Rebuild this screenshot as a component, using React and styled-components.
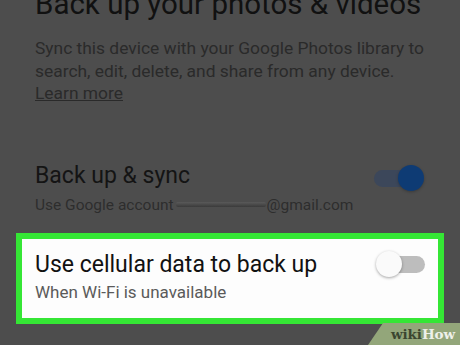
import React from "react";
import styled, { createGlobalStyle } from "styled-components";

const Global = createGlobalStyle`
  html, body {
    margin: 0;
    padding: 0;
    background: #4d4d4d;
  }
  * { box-sizing: border-box; }
`;

const Screen = styled.div`
  position: relative;
  width: 460px;
  height: 345px;
  overflow: hidden;
  background: #4d4d4d;
  font-family: Roboto, "Noto Sans", sans-serif;
`;

const Dimmed = styled.div`
  padding: 0 34px 0 35px;
`;

const Title = styled.h1`
  margin: -13px 0 0;
  font-size: 29.5px;
  font-weight: 400;
  line-height: 34px;
  color: #111;
  white-space: nowrap;
`;

const Blurb = styled.p`
  margin: 16px 0 0;
  font-size: 17.4px;
  line-height: 22.5px;
  color: #2a2a2a;
`;

const LearnMore = styled.a`
  color: #2a2a2a;
  text-decoration: underline;
`;

const Row = styled.div`
  display: flex;
  align-items: flex-start;
  justify-content: space-between;
  padding: ${p => p.$pad || "0"};
`;

const Texts = styled.div`
  display: flex;
  flex-direction: column;
`;

const Label = styled.div`
  font-size: 23px;
  line-height: 27px;
  color: ${p => (p.$lit ? "#111" : "#141414")};
  white-space: nowrap;
`;

const Sub = styled.div`
  margin-top: ${p => p.$mt};
  font-size: ${p => p.$size};
  line-height: 20px;
  color: ${p => (p.$lit ? "#5a5a5a" : "#2d2d2d")};
  display: flex;
  align-items: center;
  white-space: nowrap;
`;

const Redacted = styled.span`
  display: inline-block;
  width: 90px;
  height: 5px;
  margin: 0 1px 0 2px;
  background: linear-gradient(#5a5a5a, #3a3a3a);
  border-radius: 2px;
`;

const Track = styled.div`
  position: relative;
  flex-shrink: 0;
  width: 46px;
  height: 17px;
  border-radius: 9px;
  background: ${p => p.$bg};
  margin: ${p => p.$m};
`;

const Thumb = styled.div`
  position: absolute;
  top: 50%;
  ${p => (p.$on ? "right: -4px;" : "left: -3px;")}
  width: 26px;
  height: 26px;
  margin-top: -13px;
  border-radius: 50%;
  background: ${p => p.$bg};
  box-shadow: 0 1px 3px rgba(0, 0, 0, ${p => (p.$on ? 0.25 : 0.35)});
`;

const Highlight = styled.div`
  margin: 18px 16px 0;
  border: 6px solid #35e635;
  background: #fdfdfd;
  height: 91px;
  padding: 12px 13px 0 13px;
`;

const Badge = styled.div`
  position: absolute;
  right: 0;
  bottom: 0;
  width: 92px;
  height: 22px;
  background: #93a67a;
  clip-path: polygon(15px 0, 100% 0, 100% 100%, 0 100%);
  display: flex;
  align-items: center;
  justify-content: flex-end;
  padding-right: 5px;
  font-family: "DejaVu Serif", "Liberation Serif", serif;
  font-weight: 700;
  font-size: 13.5px;
  letter-spacing: -0.1px;
`;

const Wiki = styled.span`
  color: #3b4630;
`;

const How = styled.span`
  color: #eef0ea;
`;

export default function App() {
  return (
    <Screen>
      <Global />
      <Dimmed>
        <Title>Back up your photos &amp; videos</Title>
        <Blurb>
          Sync this device with your Google Photos library to search, edit,
          delete, and share from any device.
          <br />
          <LearnMore>Learn more</LearnMore>
        </Blurb>
        <Row $pad="57px 0 0 0">
          <Texts>
            <Label>Back up &amp; sync</Label>
            <Sub $mt="6px" $size="15.5px">
              Use Google account<Redacted />@gmail.com
            </Sub>
          </Texts>
          <Track $bg="#3c475a" $m="8px 6px 0 0">
            <Thumb $on $bg="#0e3b74" />
          </Track>
        </Row>
      </Dimmed>
      <Highlight>
        <Row>
          <Texts>
            <Label $lit>Use cellular data to back up</Label>
            <Sub $lit $mt="4px" $size="17px">When Wi-Fi is unavailable</Sub>
          </Texts>
          <Track $bg="#bdbdbd" $m="5px 0 0 0">
            <Thumb $bg="#fafafa" />
          </Track>
        </Row>
      </Highlight>
      <Badge>
        <Wiki>wiki</Wiki>
        <How>How</How>
      </Badge>
    </Screen>
  );
}
